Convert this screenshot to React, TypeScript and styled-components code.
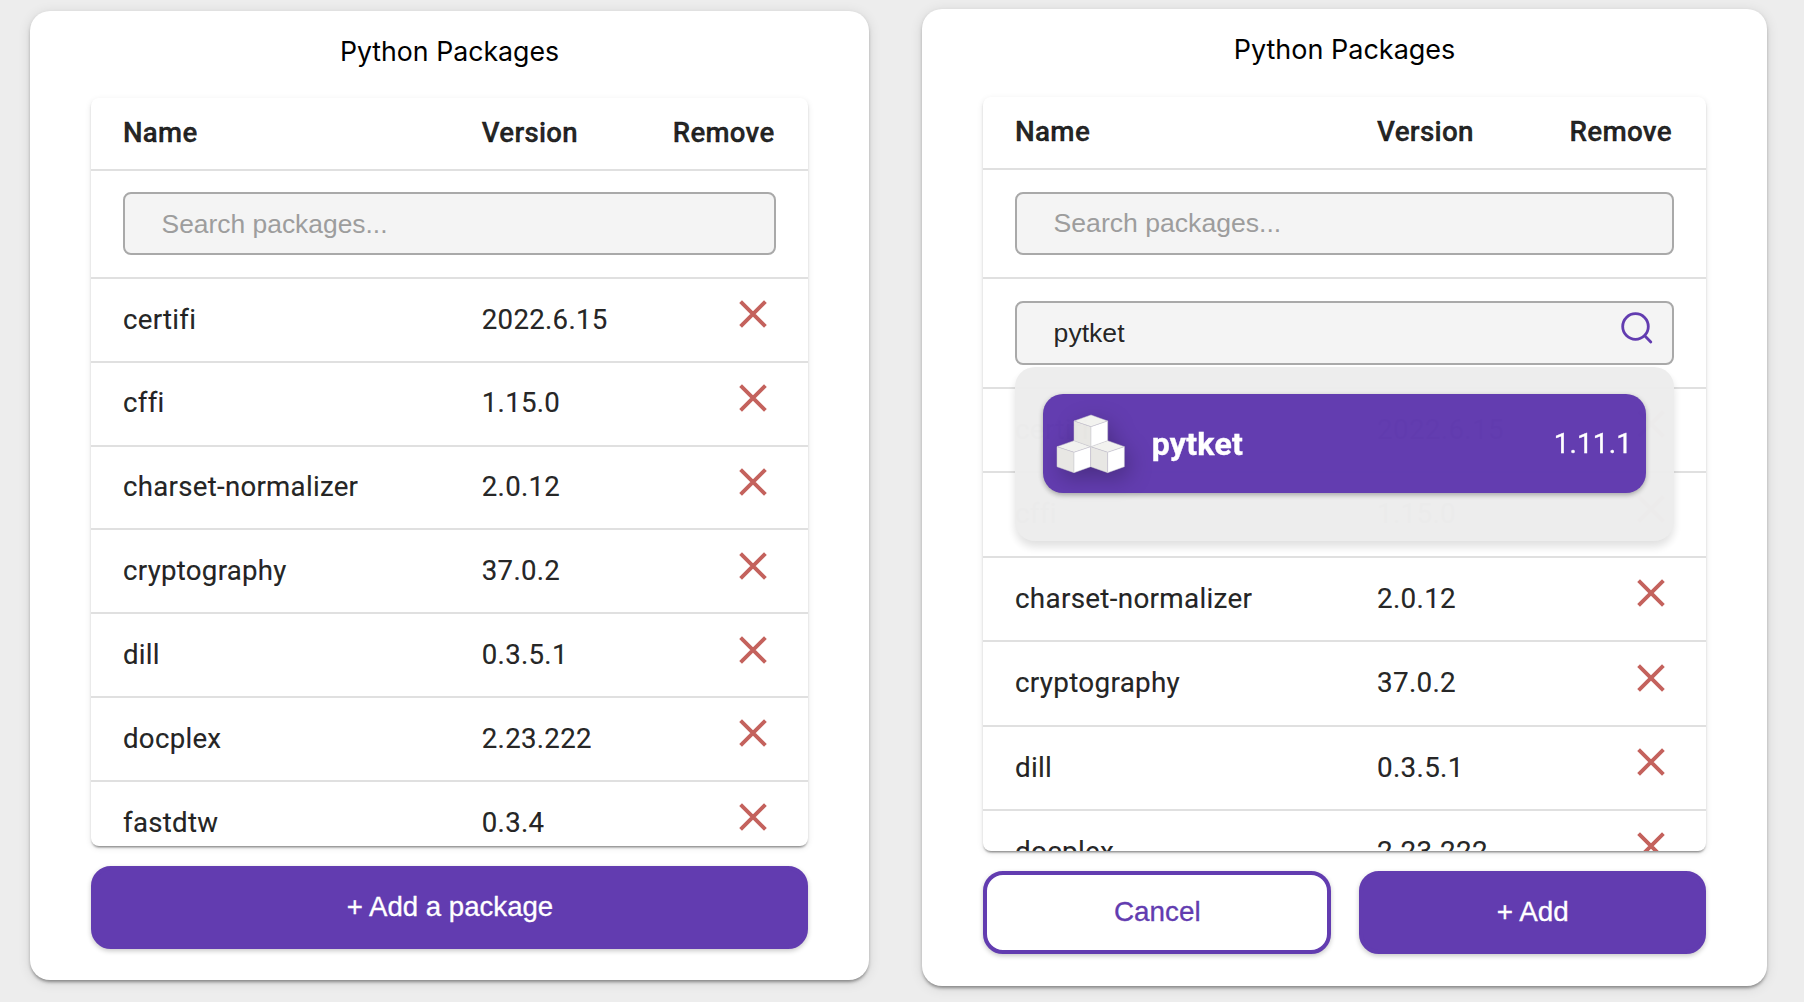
import React from "react";
import styled, { ThemeProvider, createGlobalStyle } from "styled-components";

const PURPLE = "#623cb0";

const Global = createGlobalStyle`
  * { box-sizing: border-box; }
  html, body { margin: 0; padding: 0; background: #ededed; }
`;

const compact = {
  card: 839, top: 11, height: 968.6, title: 87, titleText: 81, titleFont: 26.7,
  tableHeight: 748.3, header: 72.9, search: 108, add: 108, row: 83.87, nameCol: 358.8, versionCol: 191,
  font: 27.6, inputFont: 26.4, inputTop: 21.2, inputHeight: 63, actionsGap: 19.3, action: 83,
};
const regular = {
  card: 845, top: 9, height: 976.6, title: 88, titleText: 82, titleFont: 27,
  tableHeight: 753.6, header: 73, search: 108.8, add: 110.2, row: 84.4, nameCol: 362, versionCol: 192.4,
  font: 27.83, inputFont: 26.6, inputTop: 21.8, inputHeight: 63.2, actionsGap: 20, action: 83.4,
};
type Metrics = typeof compact;

declare module "styled-components" {
  export interface DefaultTheme extends Metrics {}
}

const Page = styled.main`
  display: flex;
  gap: 53px;
  width: 1804px;
  height: 1002px;
  padding-left: 30px;
  overflow: hidden;
  background: #ededed;
`;

const Card = styled.section`
  flex: none;
  width: ${(p) => p.theme.card}px;
  height: ${(p) => p.theme.height}px;
  margin-top: ${(p) => p.theme.top}px;
  padding: 0 61px;
  border-radius: 20px;
  background: #fff;
  box-shadow: 0 3px 3px -1px rgba(0, 0, 0, 0.3), 0 2px 4px rgba(0, 0, 0, 0.12), 0 2px 13px rgba(0, 0, 0, 0.11);
`;

const Title = styled.h2`
  margin: 0;
  height: ${(p) => p.theme.title}px;
  font: 400 ${(p) => p.theme.titleFont}px/${(p) => p.theme.titleText}px Inter, sans-serif;
  text-align: center;
  color: #000;
`;

const Table = styled.div`
  height: ${(p) => p.theme.tableHeight}px;
  overflow: hidden;
  border-radius: 8px;
  background: #fff;
  box-shadow: 0 3px 2px -2px rgba(0, 0, 0, 0.3), 0 2px 2px rgba(0, 0, 0, 0.16), 0 2px 6px rgba(0, 0, 0, 0.1);
  font-family: Roboto, sans-serif;
  font-size: ${(p) => p.theme.font}px;
  letter-spacing: 0.01071em;
  color: rgba(0, 0, 0, 0.87);
`;

const Row = styled.div`
  display: grid;
  grid-template-columns: ${(p) => p.theme.nameCol}px ${(p) => p.theme.versionCol}px 1fr;
  align-items: center;
  height: ${(p) => p.theme.row}px;
  padding: 0 32px 1.4px;
  border-bottom: 2px solid #e0e0e0;
  -webkit-text-stroke: 0.2px;
`;

const HeaderRow = styled(Row)`
  height: ${(p) => p.theme.header}px;
  padding-bottom: 1.6px;
  font-weight: 500;
  -webkit-text-stroke: 0.4px;
`;

const FieldRow = styled.div<{ $kind: "search" | "add" }>`
  height: ${(p) => p.theme[p.$kind]}px;
  padding: ${(p) => p.theme.inputTop}px 32px 0;
  border-bottom: 2px solid #e0e0e0;
`;

const Field = styled.div<{ $tall?: boolean }>`
  position: relative;
  display: flex;
  align-items: center;
  justify-content: space-between;
  height: ${(p) => (p.$tall ? 64.8 : p.theme.inputHeight)}px;
  padding: 1px 18px 0 36px;
  border: 2px solid #a9a9a9;
  border-radius: 8px;
  background: #f4f4f4;
`;

const Input = styled.input`
  flex: 1;
  min-width: 0;
  padding: 0 0 0 0.6px;
  border: 0;
  outline: 0;
  background: none;
  font: ${(p) => p.theme.inputFont}px "Liberation Sans", Arial, sans-serif;
  color: rgba(0, 0, 0, 0.87);
  &::placeholder {
    color: #9d9d9d;
    opacity: 1;
  }
`;

const SearchIcon = styled.svg`
  flex: none;
  width: 34px;
  height: 34px;
  margin-bottom: 11px;
`;

const RemoveButton = styled.button`
  display: flex;
  justify-self: end;
  margin: 0 8px 10px 0;
  padding: 0;
  border: 0;
  background: none;
`;

const Suggestions = styled.div`
  position: absolute;
  z-index: 1;
  top: 64px;
  left: -2px;
  right: -2px;
  height: 174.6px;
  padding: 27.5px 28px;
  border-radius: 20px;
  background: #ededed;
  box-shadow: 0 6px 10px rgba(0, 0, 0, 0.13);
  opacity: 0.992;
`;

const Suggestion = styled.div`
  display: flex;
  align-items: center;
  height: 99.3px;
  padding: 0 14px 0 12px;
  border-radius: 20px;
  background: ${PURPLE};
  box-shadow: 0 2px 5px rgba(0, 0, 0, 0.3);
  color: #fff;
`;

const SuggestionName = styled.strong`
  flex: 1;
  margin-left: 25px;
  font-size: 32px;
  font-weight: 700;
  -webkit-text-stroke: 0.4px;
`;

const SuggestionVersion = styled.span`
  font-size: 28px;
  letter-spacing: 0.1px;
  -webkit-text-stroke: 0.3px;
`;

const Cubes = styled.svg`
  width: 71.7px;
  height: 61.7px;
  overflow: visible;
  filter: drop-shadow(4px 7px 11px rgba(0, 0, 0, 0.26));
`;

const Actions = styled.div`
  display: flex;
  gap: 28px;
  margin-top: ${(p) => p.theme.actionsGap}px;
`;

const Button = styled.button<{ $outlined?: boolean }>`
  flex: 1;
  height: ${(p) => p.theme.action}px;
  padding: 0 0 0 1px;
  border: 4px solid ${PURPLE};
  border-radius: 20px;
  background: ${(p) => (p.$outlined ? "#fff" : PURPLE)};
  box-shadow: 0 2px 5px rgba(0, 0, 0, 0.22);
  font: ${(p) => p.theme.font}px "Liberation Sans", Arial, sans-serif;
  color: ${(p) => (p.$outlined ? PURPLE : "#fff")};
  -webkit-text-stroke: 0.3px;
`;

const packages = [
  ["certifi", "2022.6.15"],
  ["cffi", "1.15.0"],
  ["charset-normalizer", "2.0.12"],
  ["cryptography", "37.0.2"],
  ["dill", "0.3.5.1"],
  ["docplex", "2.23.222"],
  ["fastdtw", "0.3.4"],
];

const Cross = () => (
  <svg width="30" height="30" viewBox="0 0 30 30" fill="none" stroke="#c4625d" strokeWidth="3.9">
    <path d="M2.6 2.6 27.4 27.4M27.4 2.6 2.6 27.4" />
  </svg>
);

const Magnifier = () => (
  <SearchIcon viewBox="0 0 34 34" fill="none" stroke={PURPLE} strokeWidth="2.8" strokeLinecap="round">
    <circle cx="15.5" cy="15.5" r="12.8" />
    <path d="M25 25 30.8 30.9" />
  </SearchIcon>
);

const Cube = ({ x, y }: { x: number; y: number }) => (
  <g transform={`translate(${x} ${y})`} stroke="#c9c8cc" strokeWidth="1.5" strokeLinejoin="round">
    <path fill="#f2f2ef" d="M51 0 101 18 51 35 0 18Z" />
    <path fill="#e8e7e4" d="M0 18 51 35V96L0 78Z" />
    <path fill="#fff" d="M51 35 101 18V78L51 96Z" />
  </g>
);

const PackageLogo = () => (
  <Cubes viewBox="225 398 215 185">
    <Cube x={282} y={404} />
    <Cube x={231} y={481} />
    <Cube x={332} y={481} />
  </Cubes>
);

function PackagePanel({ metrics, adding }: { metrics: Metrics; adding?: boolean }) {
  return (
    <ThemeProvider theme={metrics}>
      <Card>
        <Title>Python Packages</Title>
        <Table>
          <HeaderRow>
            <span>Name</span>
            <span>Version</span>
            <span>Remove</span>
          </HeaderRow>
          <FieldRow $kind="search">
            <Field>
              <Input placeholder="Search packages..." />
            </Field>
          </FieldRow>
          {adding && (
            <FieldRow $kind="add">
              <Field $tall>
                <Input defaultValue="pytket" />
                <Magnifier />
                <Suggestions>
                  <Suggestion>
                    <PackageLogo />
                    <SuggestionName>pytket</SuggestionName>
                    <SuggestionVersion>1.11.1</SuggestionVersion>
                  </Suggestion>
                </Suggestions>
              </Field>
            </FieldRow>
          )}
          {packages.map(([name, version]) => (
            <Row key={name}>
              <span>{name}</span>
              <span>{version}</span>
              <RemoveButton aria-label={`Remove ${name}`}>
                <Cross />
              </RemoveButton>
            </Row>
          ))}
        </Table>
        <Actions>
          {adding ? (
            <>
              <Button $outlined>Cancel</Button>
              <Button>+ Add</Button>
            </>
          ) : (
            <Button>+ Add a package</Button>
          )}
        </Actions>
      </Card>
    </ThemeProvider>
  );
}

export default function App() {
  return (
    <Page>
      <Global />
      <PackagePanel metrics={compact} />
      <PackagePanel metrics={regular} adding />
    </Page>
  );
}
